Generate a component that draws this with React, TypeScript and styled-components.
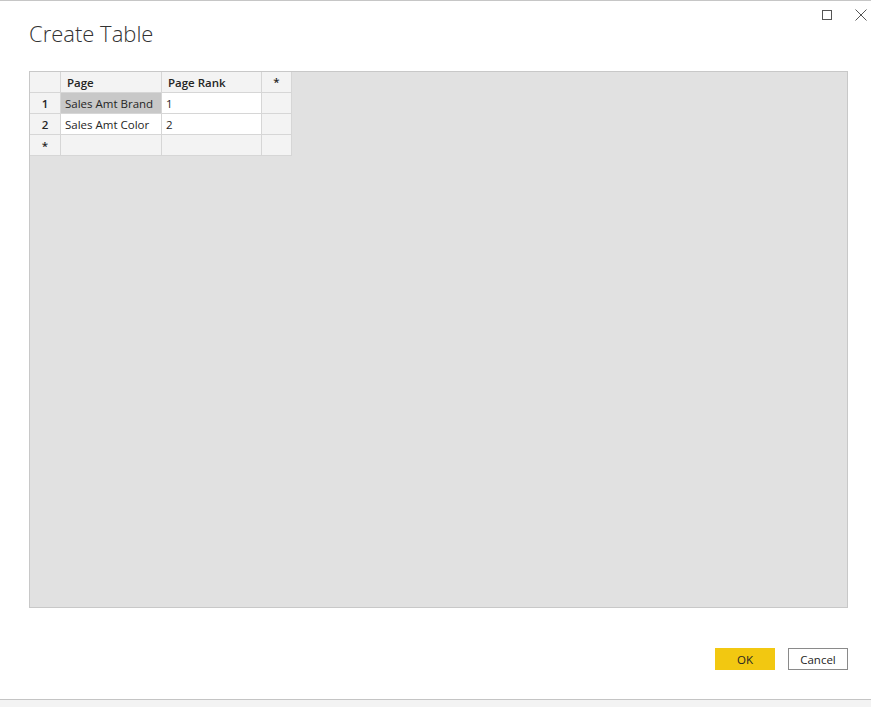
import React from "react";
import styled, { createGlobalStyle } from "styled-components";

const GlobalStyle = createGlobalStyle`
  html, body {
    margin: 0;
    padding: 0;
    background: #f3f3f3;
    font-family: "Open Sans", "Noto Sans", sans-serif;
  }
`;

const rows = [
  { id: "1", page: "Sales Amt Brand", rank: "1", selected: true },
  { id: "2", page: "Sales Amt Color", rank: "2", selected: false },
];

export default function App() {
  return (
    <>
      <GlobalStyle />
      <Dialog>
        <TitleBar>
          <Title>Create Table</Title>
          <WindowButtons>
            <WindowButton aria-label="Maximize">
              <svg width="11" height="11" viewBox="0 0 11 11">
                <rect x="0.5" y="0.5" width="9" height="9" fill="none" stroke="#555" strokeWidth="1" />
              </svg>
            </WindowButton>
            <WindowButton aria-label="Close">
              <svg width="12" height="12" viewBox="0 0 12 12">
                <path d="M0.5 0.5 L11.5 11.5 M11.5 0.5 L0.5 11.5" stroke="#555" strokeWidth="1" />
              </svg>
            </WindowButton>
          </WindowButtons>
        </TitleBar>

        <GridArea>
          <DataGrid>
            <HeadCell />
            <HeadCell>Page</HeadCell>
            <HeadCell>Page Rank</HeadCell>
            <HeadCell $center>*</HeadCell>

            {rows.map((r) => (
              <React.Fragment key={r.id}>
                <RowHead>{r.id}</RowHead>
                <Cell $selected={r.selected}>{r.page}</Cell>
                <Cell>{r.rank}</Cell>
                <Cell $blank />
              </React.Fragment>
            ))}

            <RowHead>*</RowHead>
            <Cell $blank />
            <Cell $blank />
            <Cell $blank />
          </DataGrid>
        </GridArea>

        <Footer>
          <PrimaryButton>OK</PrimaryButton>
          <SecondaryButton>Cancel</SecondaryButton>
        </Footer>
      </Dialog>
    </>
  );
}

const Dialog = styled.div`
  width: 871px;
  height: 700px;
  box-sizing: border-box;
  background: #ffffff;
  border-top: 1px solid #c6c6c6;
  border-bottom: 1px solid #c4c4c4;
  box-shadow: 0 2px 2px rgba(0, 0, 0, 0.25);
  display: flex;
  flex-direction: column;
  padding: 0 23px 0 29px;
`;

const TitleBar = styled.div`
  display: flex;
  justify-content: space-between;
  align-items: flex-start;
  height: 70px;
  margin-right: -23px;
`;

const Title = styled.h1`
  margin: 17px 0 0 0;
  font-family: "Open Sans", "Noto Sans", sans-serif;
  font-weight: 300;
  font-size: 22px;
  color: #333333;
`;

const WindowButtons = styled.div`
  display: flex;
  gap: 22px;
  padding: 8px 4px 0 0;
`;

const WindowButton = styled.button`
  border: none;
  background: transparent;
  padding: 0;
  width: 12px;
  height: 12px;
  display: flex;
  align-items: center;
  justify-content: center;
`;

const GridArea = styled.div`
  width: 819px;
  height: 537px;
  box-sizing: border-box;
  background: #e1e1e1;
  border: 1px solid #c8c8c8;
`;

const DataGrid = styled.div`
  display: inline-grid;
  grid-template-columns: 30px 100px 99px 29px;
  grid-auto-rows: 20px;
  gap: 1px;
  background: #d6d6d6;
  border-right: 1px solid #d6d6d6;
  border-bottom: 1px solid #d6d6d6;
  font-size: 11.5px;
  color: #252525;
`;

const HeadCell = styled.div<{ $center?: boolean }>`
  background: #f3f3f3;
  font-weight: 600;
  display: flex;
  align-items: center;
  justify-content: ${(p) => (p.$center ? "center" : "flex-start")};
  padding-left: ${(p) => (p.$center ? "0" : "6px")};
  padding-top: ${(p) => (p.$center ? "0" : "1px")};
  line-height: 1;
`;

const RowHead = styled.div`
  background: #f3f3f3;
  font-weight: 600;
  display: flex;
  align-items: center;
  justify-content: center;
  padding-top: 1px;
`;

const Cell = styled.div<{ $selected?: boolean; $blank?: boolean }>`
  background: ${(p) => (p.$selected ? "#c8c8c8" : p.$blank ? "#f3f3f3" : "#ffffff")};
  display: flex;
  align-items: center;
  padding-left: 4px;
  padding-top: 1px;
  white-space: nowrap;
  overflow: hidden;
`;

const Footer = styled.div`
  display: flex;
  justify-content: flex-end;
  gap: 13px;
  margin-top: 40px;
`;

const ButtonBase = styled.button`
  height: 22px;
  width: 60px;
  box-sizing: border-box;
  font-family: "Open Sans", "Noto Sans", sans-serif;
  font-size: 11.5px;
  color: #252525;
  padding: 0;
`;

const PrimaryButton = styled(ButtonBase)`
  background: #f2c811;
  border: none;
`;

const SecondaryButton = styled(ButtonBase)`
  background: #ffffff;
  border: 1px solid #8a8a8a;
`;
